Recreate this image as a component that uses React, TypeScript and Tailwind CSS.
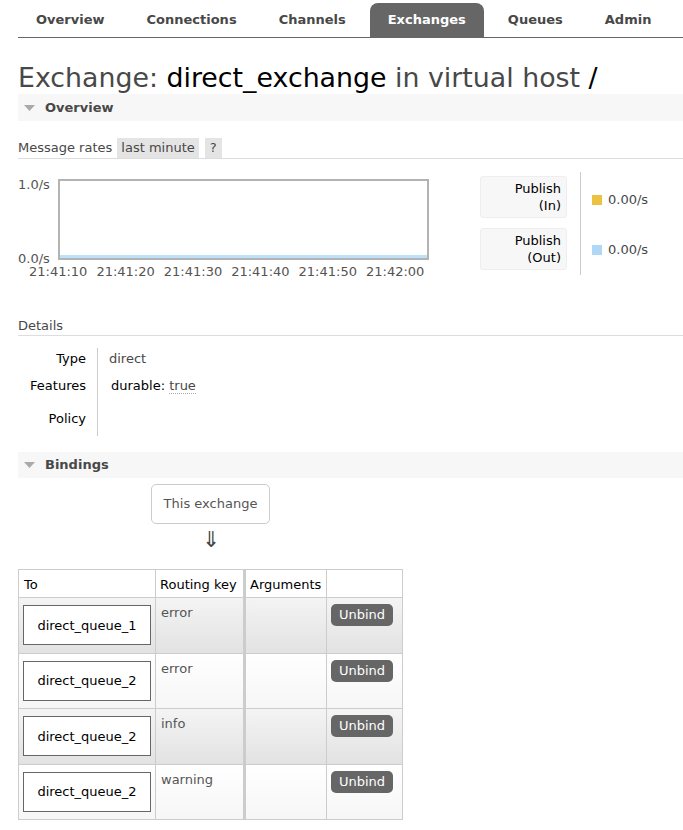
import React from "react";

const tabs = ["Overview", "Connections", "Channels", "Exchanges", "Queues", "Admin"];
const times = ["21:41:10", "21:41:20", "21:41:30", "21:41:40", "21:41:50", "21:42:00"];
const rows = [
  { q: "direct_queue_1", k: "error", odd: true },
  { q: "direct_queue_2", k: "error", odd: false },
  { q: "direct_queue_2", k: "info", odd: true },
  { q: "direct_queue_2", k: "warning", odd: false },
];

function Tri() {
  return (
    <svg width="11" height="8" viewBox="0 0 11 8" className="mr-[10px]">
      <polygon points="0,1 11,1 5.5,7" fill="#aaaaaa" />
    </svg>
  );
}

export default function App() {
  return (
    <div
      className="w-[683px] h-[830px] bg-white text-[13px] text-[#484848] overflow-hidden"
      style={{ fontFamily: "'DejaVu Sans', Verdana, sans-serif" }}
    >
      {/* nav */}
      <div className="pl-[18px] pt-[3px]">
        <div className="flex gap-[6px] border-b border-[#666]">
          {tabs.map((t) => (
            <div
              key={t}
              className={
                "h-[34px] px-[18px] flex items-center font-bold rounded-t-[8px] " +
                (t === "Exchanges" ? "bg-[#666] text-white" : "text-[#484848]")
              }
            >
              {t}
            </div>
          ))}
        </div>
      </div>

      <div className="pl-[18px]">
        <h1 className="mt-[24px] text-[26.8px] leading-[32px] text-[#484848] whitespace-nowrap">
          Exchange: <span className="text-black">direct_exchange</span> in virtual host{" "}
          <span className="text-black">/</span>
        </h1>

        {/* Overview bar */}
        <div className="h-[27px] bg-[#f7f7f7] flex items-center pl-[6px] font-bold text-[#484848]">
          <Tri />
          Overview
        </div>

        {/* message rates */}
        <div className="mt-[17px] flex items-center border-b border-[#ddd] h-[21px]">
          <span className="pr-[5px]">Message rates</span>
          <span className="bg-[#e4e4e4] px-[4px] h-[20px] flex items-center">last minute</span>
          <span className="bg-[#e4e4e4] ml-[6px] px-[5px] h-[20px] flex items-center">?</span>
        </div>

        {/* chart + legend */}
        <div className="flex mt-[13px] h-[108px]">
          <div className="relative w-[420px]">
            <div className="absolute left-0 top-[3px] text-[#545454]">1.0/s</div>
            <div className="absolute left-0 top-[77px] text-[#545454]">0.0/s</div>
            <div className="absolute left-[40px] top-[7px] w-[371px] h-[81px] border-2 border-[#b3b3b3] bg-white flex flex-col justify-end">
              <div className="h-[3px] bg-[#afd8f8] opacity-80" />
            </div>
            <div className="absolute left-[11px] top-[90px] flex gap-[9px] text-[#545454]">
              {times.map((t) => (
                <span key={t}>{t}</span>
              ))}
            </div>
          </div>
          <div className="ml-[42px] flex flex-col gap-[10px] pt-[4px]">
            <div className="w-[87px] h-[42px] bg-[#f7f7f7] border border-[#eee] rounded-[3px] text-right pr-[5px] pt-[3px] leading-[17px] text-black">
              Publish
              <br />
              (In)
            </div>
            <div className="w-[87px] h-[42px] bg-[#f7f7f7] border border-[#eee] rounded-[3px] text-right pr-[5px] pt-[3px] leading-[17px] text-black">
              Publish
              <br />
              (Out)
            </div>
          </div>
          <div className="ml-[13px] w-px h-[103px] bg-[#ccc]" />
          <div className="ml-[11px] flex flex-col">
            <div className="h-[52px] flex items-center pt-[4px]">
              <span className="w-[10px] h-[10px] bg-[#edc240] mr-[6px]" />
              0.00/s
            </div>
            <div className="h-[52px] flex items-center">
              <span className="w-[10px] h-[10px] bg-[#afd8f8] mr-[6px]" />
              0.00/s
            </div>
          </div>
        </div>

        {/* Details */}
        <div className="mt-[37px] border-b border-[#ddd] pb-[1px] leading-[17px]">Details</div>
        <div className="flex mt-[12px]">
          <div className="w-[68px] flex flex-col items-end text-black leading-[17px]">
            <div className="h-[27px] pt-[2px]">Type</div>
            <div className="h-[30px] pt-[2px]">Features</div>
            <div className="h-[32px] pt-[5px]">Policy</div>
          </div>
          <div className="ml-[11px] w-px bg-[#ccc] h-[88px]" />
          <div className="pl-[11px] flex flex-col leading-[17px]">
            <div className="h-[27px] pt-[2px]">direct</div>
            <div className="h-[30px] pt-[2px] pl-[2px] text-black">
              durable:{" "}
              <span className="text-[#484848] border-b border-dotted border-[#aaa]">true</span>
            </div>
          </div>
        </div>

        {/* Bindings bar */}
        <div className="mt-[15px] h-[26px] bg-[#f7f7f7] flex items-center pl-[6px] font-bold text-[#484848]">
          <Tri />
          Bindings
        </div>

        <div className="ml-[133px] mt-[6px] w-[119px] h-[40px] border border-[#ccc] rounded-[5px] flex items-center justify-center text-[#555]">
          This exchange
        </div>
        <div className="ml-[184px] mt-[2px] text-[22px] leading-[28px] text-[#444]">⇓</div>

        {/* table */}
        <table className="mt-[15px] border-collapse border border-[#ccc]">
          <thead>
            <tr className="h-[28px] text-black">
              <th className="w-[137px] border border-[#ccc] text-left font-normal pl-[5px] pt-[2px]">To</th>
              <th className="w-[89px] border border-[#ccc] text-left font-normal pl-[4px] pt-[2px]">Routing key</th>
              <th className="w-[82px] border border-[#ccc] border-l-[3px] text-left font-normal pl-[4px] pt-[2px]">Arguments</th>
              <th className="w-[76px] border border-[#ccc]" />
            </tr>
          </thead>
          <tbody>
            {rows.map((r, i) => (
              <tr
                key={i}
                className={
                  "h-[55.5px] " +
                  (r.odd
                    ? "bg-gradient-to-b from-[#f4f4f4] to-[#e2e2e2]"
                    : "bg-gradient-to-b from-white to-[#f6f6f6]")
                }
              >
                <td className="border border-[#ccc] px-[4px] align-middle">
                  <div className="w-[128px] h-[40px] border border-[#666] bg-white flex items-center justify-center text-black">
                    {r.q}
                  </div>
                </td>
                <td className="border border-[#ccc] align-top pl-[5px] pt-[5px] text-[#555]">{r.k}</td>
                <td className="border border-[#ccc] border-l-[3px]" />
                <td className="border border-[#ccc] align-top pl-[4px] pt-[6px]">
                  <div className="w-[62px] h-[22px] rounded-[5px] bg-[#666] text-white flex items-center justify-center">
                    Unbind
                  </div>
                </td>
              </tr>
            ))}
          </tbody>
        </table>
      </div>
    </div>
  );
}
